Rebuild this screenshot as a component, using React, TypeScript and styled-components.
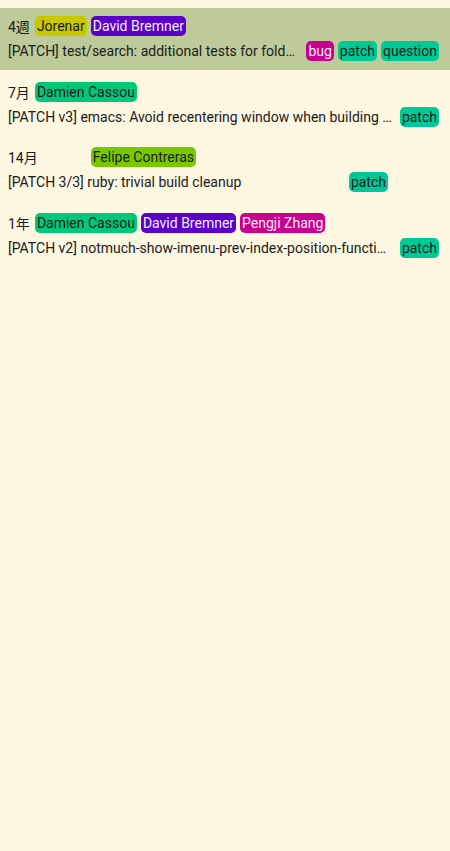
import React from "react";
import styled, { createGlobalStyle } from "styled-components";

const GlobalStyle = createGlobalStyle`
  html, body {
    margin: 0;
    padding: 0;
    background: #fdf7e1;
  }
  body {
    font-family: Roboto, "Noto Sans CJK JP", sans-serif;
    font-size: 14px;
    color: #1a1a1a;
  }
`;

const List = styled.div`
  padding-top: 8px;
  width: 450px;
  min-height: 843px;
  background: #fdf7e1;
`;

const Row = styled.div<{ $selected?: boolean }>`
  height: 62px;
  box-sizing: border-box;
  padding: 8px 11px 0 8px;
  margin-bottom: 3.67px;
  background: ${(p) => (p.$selected ? "#bdcb9b" : "transparent")};
  display: flex;
  flex-direction: column;
  gap: 5px;
`;

const Line = styled.div`
  display: flex;
  align-items: center;
  height: 20px;
  gap: 4px;
  white-space: nowrap;
`;

const DateText = styled.span`
  margin-right: 1px;
`;

const Subject = styled.span`
  flex: 1;
  min-width: 0;
  overflow: hidden;
  text-overflow: ellipsis;
  margin-right: 3px;
`;

const Tags = styled.div`
  display: flex;
  gap: 4px;
  flex: none;
`;

const Badge = styled.span<{ $bg: string; $fg: string; $hidden?: boolean; $w?: number }>`
  display: inline-block;
  height: 20px;
  line-height: 20px;
  padding: 0 2px;
  border-radius: 5px;
  background: ${(p) => (p.$hidden ? "transparent" : p.$bg)};
  color: ${(p) => (p.$hidden ? "transparent" : p.$fg)};
  ${(p) => (p.$w ? `width: ${p.$w}px; box-sizing: border-box;` : "")}
`;

const colors: Record<string, [string, string]> = {
  Jorenar: ["#c8c800", "#1a1a1a"],
  "David Bremner": ["#5a00c8", "#f4eeff"],
  "Damien Cassou": ["#00c878", "#1a1a1a"],
  "Felipe Contreras": ["#78c800", "#1a1a1a"],
  "Pengji Zhang": ["#c8008c", "#ffeef8"],
  bug: ["#c8008c", "#ffeef8"],
  patch: ["#00c896", "#1a1a1a"],
  question: ["#00c896", "#1a1a1a"],
};

type Thread = {
  date: string;
  authors: string[];
  hiddenAuthor?: number;
  subject: string;
  tags: string[];
  hiddenTag?: number;
  selected?: boolean;
};

const threads: Thread[] = [
  {
    date: "4週",
    authors: ["Jorenar", "David Bremner"],
    subject: "[PATCH] test/search: additional tests for folder searches and more",
    tags: ["bug", "patch", "question"],
    selected: true,
  },
  {
    date: "7月",
    authors: ["Damien Cassou"],
    subject: "[PATCH v3] emacs: Avoid recentering window when building index",
    tags: ["patch"],
  },
  {
    date: "14月",
    authors: ["Felipe Contreras"],
    hiddenAuthor: 44,
    subject: "[PATCH 3/3] ruby: trivial build cleanup",
    tags: ["patch"],
    hiddenTag: 47,
  },
  {
    date: "1年",
    authors: ["Damien Cassou", "David Bremner", "Pengji Zhang"],
    subject: "[PATCH v2] notmuch-show-imenu-prev-index-position-function: fix",
    tags: ["patch"],
  },
];

const Tag = ({ name }: { name: string }) => {
  const [bg, fg] = colors[name];
  return (
    <Badge $bg={bg} $fg={fg}>
      {name}
    </Badge>
  );
};

export default function App() {
  return (
    <>
      <GlobalStyle />
      <List>
        {threads.map((t, i) => (
          <Row key={i} $selected={t.selected}>
            <Line>
              <DateText>{t.date}</DateText>
              {t.hiddenAuthor && <Badge $bg="" $fg="" $hidden $w={t.hiddenAuthor} />}
              {t.authors.map((a) => (
                <Tag key={a} name={a} />
              ))}
            </Line>
            <Line>
              <Subject>{t.subject}</Subject>
              <Tags>
                {t.tags.map((g) => (
                  <Tag key={g} name={g} />
                ))}
                {t.hiddenTag && <Badge $bg="" $fg="" $hidden $w={t.hiddenTag} />}
              </Tags>
            </Line>
          </Row>
        ))}
      </List>
    </>
  );
}
